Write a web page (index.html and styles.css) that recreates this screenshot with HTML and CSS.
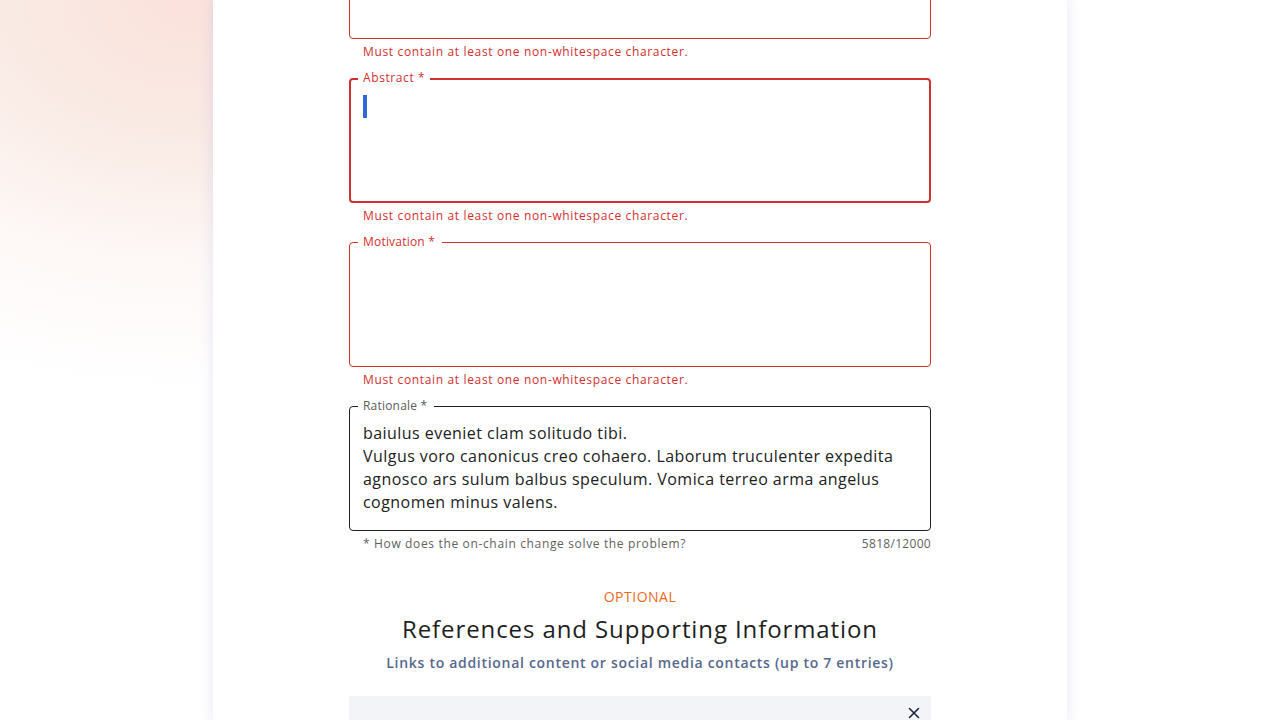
FILE: index.html
```html
<!DOCTYPE html>
<html lang="en">
<head>
<meta charset="utf-8">
<title>Governance Action</title>
<link rel="stylesheet" href="styles.css">
</head>
<body>
<div class="page">
  <main class="card">
    <form class="form">
      <div class="field">
        <div class="box box-error"></div>
        <div class="helper helper-error">Must contain at least one non-whitespace character.</div>
      </div>
      <div class="field">
        <div class="box box-error box-focus">
          <span class="label label-error">Abstract *</span>
          <div class="content"><span class="caret"></span></div>
        </div>
        <div class="helper helper-error">Must contain at least one non-whitespace character.</div>
      </div>
      <div class="field">
        <div class="box box-error">
          <span class="label label-error label-tight">Motivation *</span>
          <div class="content"></div>
        </div>
        <div class="helper helper-error">Must contain at least one non-whitespace character.</div>
      </div>
      <div class="field">
        <div class="box box-dark">
          <span class="label label-grey label-tight">Rationale *</span>
          <div class="content">baiulus eveniet clam solitudo tibi.<br>Vulgus voro canonicus creo cohaero. Laborum truculenter expedita agnosco ars sulum balbus speculum. Vomica terreo arma angelus cognomen minus valens.</div>
        </div>
        <div class="helper helper-row"><span>* How does the on-chain change solve the problem?</span><span class="counter">5818/12000</span></div>
      </div>
      <section class="optional">
        <div class="overline">OPTIONAL</div>
        <h2 class="title">References and Supporting Information</h2>
        <p class="subtitle">Links to additional content or social media contacts (up to 7 entries)</p>
      </section>
      <div class="ref-box">
        <button type="button" class="close" aria-label="Remove">
          <svg width="12" height="12" viewBox="0 0 12 12"><path d="M1.5 1.5 L10.5 10.5 M10.5 1.5 L1.5 10.5" stroke="#1d2535" stroke-width="1.6" fill="none" stroke-linecap="round"/></svg>
        </button>
      </div>
    </form>
  </main>
</div>
</body>
</html>
```
FILE: styles.css
```css
* { box-sizing: border-box; }
html, body { margin: 0; height: 720px; overflow: hidden; }
body {
  font-family: "Open Sans", "DejaVu Sans", sans-serif;
  color: #212121;
  background:
    radial-gradient(ellipse 560px 390px at 190px 0px, rgba(250,218,210,0.8) 0%, rgba(247,226,218,0.7) 35%, rgba(252,240,236,0.45) 68%, rgba(255,255,255,0) 100%),
    #ffffff;
}
.page { display: flex; justify-content: center; }
.card {
  width: 854px;
  height: 720px;
  background: #fff;
  box-shadow: 0 0 14px rgba(110, 115, 210, 0.16);
  overflow: hidden;
}
.form { width: 582px; margin: -86px auto 0; display: flex; flex-direction: column; }
.field { display: flex; flex-direction: column; margin-bottom: 16px; }
.box {
  position: relative;
  height: 125px;
  border: 1px solid #d32f2f;
  border-radius: 4px;
}
.box-focus { border-width: 2px; }
.box-dark { border-color: #212121; }
.label {
  position: absolute;
  top: -8px;
  left: 8px;
  padding: 0 5px;
  background: #fff;
  font-size: 12px;
  line-height: 14px;
  letter-spacing: 0.6px;
}
.label-tight { letter-spacing: 0.2px; padding-right: 7px; }
.box-focus .label { top: -9px; left: 7px; }
.label-error { color: #d32f2f; }
.label-grey { color: #5b5b5b; }
.content {
  padding: 15px 13px 16px;
  font-size: 16px;
  line-height: 23px;
  letter-spacing: 0.45px;
  color: #212121;
}
.box-focus .content { padding: 15px 12px; }
.caret { display: inline-block; width: 4px; height: 23px; background: #3068d6; vertical-align: top; }
.helper {
  margin-top: 3px;
  padding: 0 0 0 14px;
  font-size: 12px;
  line-height: 20px;
  letter-spacing: 0.65px;
}
.helper-error { color: #d32f2f; }
.helper-row { display: flex; justify-content: space-between; color: #5f5f5f; }
.counter { letter-spacing: 0.3px; }
.optional { text-align: center; margin-top: 16px; }
.overline { font-size: 14px; line-height: 21px; font-weight: 500; color: #ea6a1c; letter-spacing: 0.5px; }
.title { margin: 6px 0 0; font-size: 24px; line-height: 32px; font-weight: 400; color: #1f1f1f; letter-spacing: 0.9px; }
.subtitle { margin: 7px 0 0; font-size: 14px; line-height: 21px; font-weight: 600; color: #56688e; letter-spacing: 0.7px; }
.ref-box {
  margin-top: 23px;
  height: 80px;
  background: #f3f4f8;
  display: flex;
  justify-content: flex-end;
  align-items: flex-start;
  padding: 11px 11px 0 0;
}
.close { border: 0; background: transparent; padding: 0; width: 12px; height: 12px; display: flex; }
```
